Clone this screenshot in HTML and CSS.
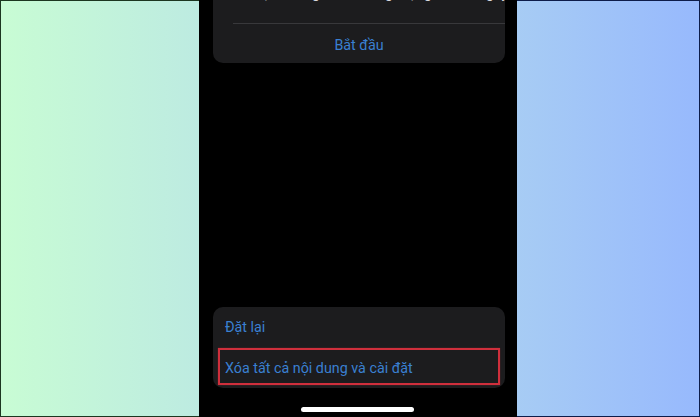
FILE: index.html
```html
<!DOCTYPE html>
<html lang="vi">
<head>
<meta charset="utf-8">
<title>Chuyển hoặc đặt lại iPhone</title>
<link rel="stylesheet" href="styles.css">
</head>
<body>
  <div class="frame">
    <div class="side side-left"></div>
    <div class="phone">
      <section class="card card-top">
        <p class="note">khi bạn không có đủ dung lượng iCloud ngay.</p>
        <div class="row row-center">Bắt đầu</div>
      </section>
      <div class="spacer"></div>
      <section class="card card-bottom">
        <div class="row row-left">Đặt lại</div>
        <div class="row row-left row-marked">
          Xóa tất cả nội dung và cài đặt
          <span class="mark"></span>
        </div>
      </section>
      <div class="home-area"><span class="home-bar"></span></div>
    </div>
    <div class="side side-right"></div>
  </div>
</body>
</html>
```
FILE: styles.css
```css
* { box-sizing: border-box; }

html, body {
  margin: 0;
  padding: 0;
  background: #000;
}

.frame {
  display: flex;
  width: 700px;
  height: 417px;
  font-family: Roboto, "Noto Sans", sans-serif;
}

.side { height: 100%; }

.side-left {
  width: 199px;
  background: linear-gradient(to right, #c8fcd4, #bdebe1);
  border: 1px solid #1c3620;
  border-right: none;
}

.side-right {
  width: 183px;
  background: linear-gradient(to right, #a7ccf4, #97b9fd);
  border: 1px solid #0d1c4a;
  border-left: none;
}

.phone {
  width: 318px;
  height: 100%;
  display: flex;
  flex-direction: column;
  padding: 0 12px 0 14px;
  background: #000;
}

.card {
  background: #1c1c1e;
  border-radius: 10px;
  overflow: hidden;
}

.card-top {
  height: 63px;
  border-top-left-radius: 0;
  border-top-right-radius: 0;
}

/* last line of the description, scrolled mostly out of view */
.note {
  margin: -14px 0 0 20px;
  height: 38px;
  line-height: 14px;
  font-size: 14px;
  color: #d8d8dc;
  white-space: nowrap;
  overflow: hidden;
  border-bottom: 1px solid #38383b;
}

.row {
  font-size: 14.3px;
  color: #3a80d2;
  display: flex;
  align-items: center;
}

.row-center {
  justify-content: center;
  height: 38px;
  padding-top: 3px;
}

.spacer { flex: 1; }

.card-bottom {
  height: 81px;
  position: relative;
}

.row-left {
  height: 40px;
  padding-left: 12px;
}

.row-marked {
  height: 41px;
}

.mark {
  position: absolute;
  left: 5px;
  right: 5px;
  top: 41px;
  height: 37px;
  border: 2px solid #cf2f3c;
  box-shadow: 0 0 1px rgba(207, 47, 60, 0.6);
}

.home-area {
  height: 29px;
  display: flex;
  justify-content: center;
  padding-top: 19px;
  padding-right: 4px;
}

.home-bar {
  display: block;
  width: 113px;
  height: 5px;
  border-radius: 3px;
  background: #fff;
}
```
